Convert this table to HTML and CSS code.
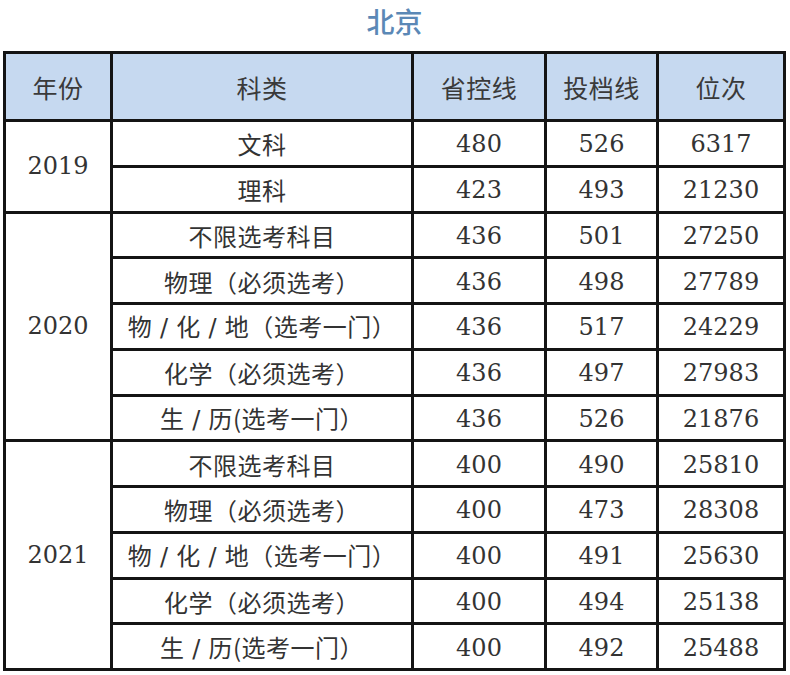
FILE: index.html
```html
<!DOCTYPE html>
<html lang="zh-CN">
<head>
<meta charset="utf-8">
<title>北京</title>
<link rel="stylesheet" href="styles.css">
</head>
<body>
<div class="page">
  <h1 class="title">北京</h1>
  <table class="score">
    <colgroup>
      <col class="c-year"><col class="c-type"><col class="c-ctrl"><col class="c-line"><col class="c-rank">
    </colgroup>
    <thead>
      <tr class="head">
        <th>年份</th><th>科类</th><th>省控线</th><th>投档线</th><th>位次</th>
      </tr>
    </thead>
    <tbody>
      <tr><td class="year" rowspan="2">2019</td><td class="cn">文科</td><td>480</td><td>526</td><td>6317</td></tr>
      <tr><td class="cn">理科</td><td>423</td><td>493</td><td>21230</td></tr>

      <tr><td class="year" rowspan="5">2020</td><td class="cn">不限选考科目</td><td>436</td><td>501</td><td>27250</td></tr>
      <tr><td class="cn">物理（必须选考）</td><td>436</td><td>498</td><td>27789</td></tr>
      <tr><td class="cn">物<span class="sl">/</span>化<span class="sl">/</span>地（选考一门）</td><td>436</td><td>517</td><td>24229</td></tr>
      <tr><td class="cn">化学（必须选考）</td><td>436</td><td>497</td><td>27983</td></tr>
      <tr><td class="cn">生<span class="sl">/</span>历(选考一门）</td><td>436</td><td>526</td><td>21876</td></tr>

      <tr><td class="year" rowspan="5">2021</td><td class="cn">不限选考科目</td><td>400</td><td>490</td><td>25810</td></tr>
      <tr><td class="cn">物理（必须选考）</td><td>400</td><td>473</td><td>28308</td></tr>
      <tr><td class="cn">物<span class="sl">/</span>化<span class="sl">/</span>地（选考一门）</td><td>400</td><td>491</td><td>25630</td></tr>
      <tr><td class="cn">化学（必须选考）</td><td>400</td><td>494</td><td>25138</td></tr>
      <tr><td class="cn">生<span class="sl">/</span>历(选考一门）</td><td>400</td><td>492</td><td>25488</td></tr>
    </tbody>
  </table>
</div>
</body>
</html>
```

FILE: styles.css
```css
html, body {
  margin: 0;
  padding: 0;
  background: #ffffff;
}

.page {
  width: 790px;
  height: 675px;
  box-sizing: border-box;
  padding: 0 0 0 3px;
}

.title {
  margin: 0;
  height: 51px;
  padding-top: 5px;
  box-sizing: border-box;
  text-align: center;
  font-family: "Noto Sans CJK SC", sans-serif;
  font-weight: 500;
  font-size: 28px;
  line-height: 32px;
  color: #5b88b6;
  width: 783px;
}

.score {
  border-collapse: collapse;
  table-layout: fixed;
  width: 783px;
  color: #333333;
  font-family: "DejaVu Serif", "Noto Sans CJK SC", serif;
  font-size: 24px;
}

.c-year { width: 107px; }
.c-type { width: 301px; }
.c-ctrl { width: 133px; }
.c-line { width: 112px; }
.c-rank { width: 127px; }

.score th,
.score td {
  border: 3px solid #141414;
  text-align: center;
  vertical-align: middle;
  padding: 0;
  height: 40.75px;
  line-height: 28px;
}

.score td { padding-top: 2px; }

.score .head th {
  background: #c6d9f0;
  height: 65px;
  font-family: "Noto Sans CJK SC", sans-serif;
  font-weight: 400;
  font-size: 25px;
  color: #3a3a3a;
  letter-spacing: 0.5px;
}

.score td.cn {
  font-family: "Noto Sans CJK SC", sans-serif;
  font-size: 24px;
  letter-spacing: 0.5px;
  color: #333333;
}

.score .sl {
  display: inline-block;
  width: 24px;
  text-align: center;
  font-family: "DejaVu Sans", sans-serif;
  font-size: 24px;
}

.score td.year {
  padding-top: 0;
}
```
